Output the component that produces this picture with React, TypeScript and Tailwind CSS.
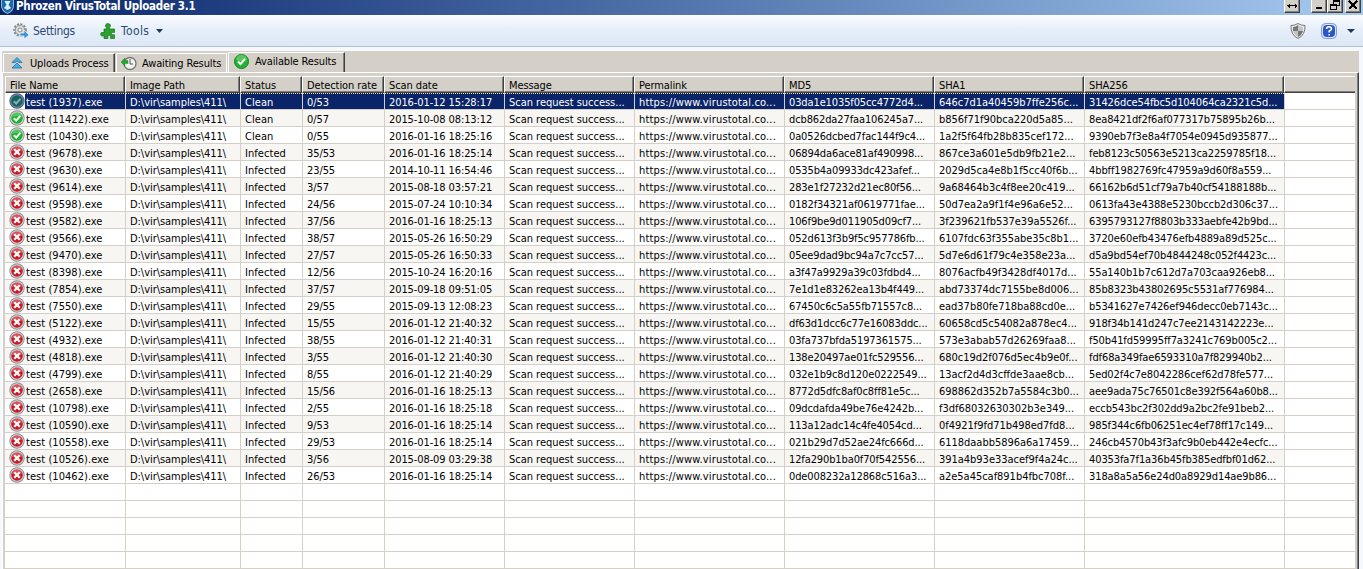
import React from "react";

const rows = `test (1937).exe|Clean|0/53|2016-01-12 15:28:17|03da1e1035f05cc4772d4...|646c7d1a40459b7ffe256c...|31426dce54fbc5d104064ca2321c5d...
test (11422).exe|Clean|0/57|2015-10-08 08:13:12|dcb862da27faa106245a7...|b856f71f90bca220d5a85...|8ea8421df2f6af077317b75895b26b...
test (10430).exe|Clean|0/55|2016-01-16 18:25:16|0a0526dcbed7fac144f9c4...|1a2f5f64fb28b835cef172...|9390eb7f3e8a4f7054e0945d935877...
test (9678).exe|Infected|35/53|2016-01-16 18:25:14|06894da6ace81af490998...|867ce3a601e5db9fb21e2...|feb8123c50563e5213ca2259785f18...
test (9630).exe|Infected|23/55|2014-10-11 16:54:46|0535b4a09933dc423afef...|2029d5ca4e8b1f5cc40f6b...|4bbff1982769fc47959a9d60f8a559...
test (9614).exe|Infected|3/57|2015-08-18 03:57:21|283e1f27232d21ec80f56...|9a68464b3c4f8ee20c419...|66162b6d51cf79a7b40cf54188188b...
test (9598).exe|Infected|24/56|2015-07-24 10:10:34|0182f34321af0619771fae...|50d7ea2a9f1f4e96a6e52...|0613fa43e4388e5230bccb2d306c37...
test (9582).exe|Infected|37/56|2016-01-16 18:25:13|106f9be9d011905d09cf7...|3f239621fb537e39a5526f...|6395793127f8803b333aebfe42b9bd...
test (9566).exe|Infected|38/57|2015-05-26 16:50:29|052d613f3b9f5c957786fb...|6107fdc63f355abe35c8b1...|3720e60efb43476efb4889a89d525c...
test (9470).exe|Infected|27/57|2015-05-26 16:50:33|05ee9dad9bc94a7c7cc57...|5d7e6d61f79c4e358e23a...|d5a9bd54ef70b4844248c052f4423c...
test (8398).exe|Infected|12/56|2015-10-24 16:20:16|a3f47a9929a39c03fdbd4...|8076acfb49f3428df4017d...|55a140b1b7c612d7a703caa926eb8...
test (7854).exe|Infected|37/57|2015-09-18 09:51:05|7e1d1e83262ea13b4f449...|abd73374dc7155be8d006...|85b8323b43802695c5531af776984...
test (7550).exe|Infected|29/55|2015-09-13 12:08:23|67450c6c5a55fb71557c8...|ead37b80fe718ba88cd0e...|b5341627e7426ef946decc0eb7143c...
test (5122).exe|Infected|15/55|2016-01-12 21:40:32|df63d1dcc6c77e16083ddc...|60658cd5c54082a878ec4...|918f34b141d247c7ee2143142223e...
test (4932).exe|Infected|38/55|2016-01-12 21:40:31|03fa737bfda5197361575...|573e3abab57d26269faa8...|f50b41fd59995ff7a3241c769b005c2...
test (4818).exe|Infected|3/55|2016-01-12 21:40:30|138e20497ae01fc529556...|680c19d2f076d5ec4b9e0f...|fdf68a349fae6593310a7f829940b2...
test (4799).exe|Infected|8/55|2016-01-12 21:40:29|032e1b9c8d120e0222549...|13acf2d4d3cffde3aae8cb...|5ed02f4c7e8042286cef62d78fe577...
test (2658).exe|Infected|15/56|2016-01-16 18:25:13|8772d5dfc8af0c8ff81e5c...|698862d352b7a5584c3b0...|aee9ada75c76501c8e392f564a60b8...
test (10798).exe|Infected|2/55|2016-01-16 18:25:18|09dcdafda49be76e4242b...|f3df68032630302b3e349...|eccb543bc2f302dd9a2bc2fe91beb2...
test (10590).exe|Infected|9/53|2016-01-16 18:25:14|113a12adc14c4fe4054cd...|0f4921f9fd71b498ed7fd8...|985f344c6fb06251ec4ef78ff17c149...
test (10558).exe|Infected|29/53|2016-01-16 18:25:14|021b29d7d52ae24fc666d...|6118daabb5896a6a17459...|246cb4570b43f3afc9b0eb442e4ecfc...
test (10526).exe|Infected|3/56|2015-08-09 03:29:38|12fa290b1ba0f70f542556...|391a4b93e33acef9f4a24c...|40353fa7f1a36b45fb385edfbf01d62...
test (10462).exe|Infected|26/53|2016-01-16 18:25:14|0de008232a12868c516a3...|a2e5a45caf891b4fbc708f...|318a8a5a56e24d0a8929d14ae9b86...`
  .split("\n")
  .map((line) => {
    const [name, status, rate, date, md5, sha1, sha256] = line.split("|");
    return [name, "D:\\vir\\samples\\411\\", status, rate, date, "Scan request success...", "https://www.virustotal.co...", md5, sha1, sha256, ""];
  });

const headers = ["File Name", "Image Path", "Status", "Detection rate", "Scan date", "Message", "Permalink", "MD5", "SHA1", "SHA256", ""];
const bodyGrid = "grid grid-cols-[121px_115px_62px_82px_120px_130px_150px_150px_150px_200px_70px]";
const headGrid = "grid grid-cols-[120px_115px_62px_82px_120px_130px_150px_150px_150px_200px_71px]";
const spacing = [
  "tracking-[0.05px]",
  "tracking-[-0.05px]",
  "tracking-[0.05px]",
  "tracking-[-0.1px]",
  "tracking-[-0.1px]",
  "tracking-[-0.02px]",
  "tracking-[0.16px]",
  "tracking-[-0.12px]",
  "tracking-[-0.03px]",
  "tracking-[-0.1px]",
  "",
];
const selectedFill =
  "bg-[#0a246a] bg-[repeating-linear-gradient(90deg,#f5db95_0_1px,#0a246a_1px_2px)] bg-[length:100%_1px] bg-no-repeat text-white";

function StatusIcon({ clean, selected }: { clean: boolean; selected: boolean }) {
  const fill = selected ? "#12655c" : clean ? "#18b52c" : "#cf1820";
  return (
    <svg viewBox="0 0 16 16" className="h-4 w-4 shrink-0">
      <circle cx="8" cy="8" r="7.7" fill={selected ? "#506088" : "#8c8c94"} />
      <circle cx="8" cy="8" r="6.8" fill={selected ? "#7683a4" : "#d4d4da"} />
      <circle cx="8" cy="8" r="5.8" fill={fill} />
      {!selected && <path d="M3 7a5 5 0 0 1 10 0Q8 5 3 7Z" fill="#fff" opacity=".25" />}
      {clean ? (
        <path d="m4.8 8.2 2.4 2.3 4.2-4.7" fill="none" stroke={selected ? "#8fa9b5" : "#fff"} strokeWidth="2" />
      ) : (
        <path d="m5.2 5.2 5.6 5.6m0-5.600-5.600 5.600" stroke="#fff" strokeWidth="2.300" />
      )}
    </svg>
  );
}

function Caption({ children }: { children: React.ReactNode }) {
  return (
    <span className="flex h-[13px] w-4 items-center justify-center border border-t-0 border-[#404040] border-l-white bg-[#d4d0c8] shadow-[inset_-1px_-1px_0_#808080]">
      <svg viewBox="0 0 12 12" className="h-3 w-3 shrink-0" fill="none" stroke="#000" shapeRendering="crispEdges">
        {children}
      </svg>
    </span>
  );
}

export default function App() {
  return (
    <div className="flex h-[569px] w-[1363px] flex-col overflow-hidden bg-[#f5f9fe] font-['DejaVu_Sans_Condensed','DejaVu_Sans',sans-serif] text-[11px] font-stretch-condensed text-black">
      <div className="flex h-[15px] shrink-0 items-start bg-linear-to-r from-[#0a246a] to-[#a6caf0] pl-px">
        <svg viewBox="0 0 13 14" className="h-[14px] w-[13px]">
          <path d="M0 0h13v6q0 5-6.5 8Q0 11 0 6Z" fill="#8fb6d6" />
          <path d="M1 0h11v6q0 4-5.500 7Q1 10 1 6Z" fill="#1c68a8" />
          <path d="M3.500 1h6L7.500 5l2.500 3-3.500 2L3 8l2.500-3Z" fill="#d8f0ff" />
        </svg>
        <span className="ml-[2px] text-[11.5px] leading-[12px] font-bold tracking-[-0.27px] text-white">Phrozen VirusTotal Uploader 3.1</span>
        <div className="ml-auto flex pr-[2px]">
          <Caption><path d="M1 5.500h10M3 3.500v4M9 3.500v4M2 4.500v2M10 4.500v2" /></Caption>
          <span className="w-[11px]" />
          <Caption><path d="M3 8.500h6M3 7.500h6" /></Caption>
          <Caption><path d="M4.500 4V.500h6v5H8M4 1.500h7M1.500 4.500h6v5h-6zM1 5.500h7" /></Caption>
          <span className="w-[2px]" />
          <Caption><path d="m2 1 8 8m0-8-8 8" strokeWidth="1.700" /></Caption>
        </div>
      </div>
      <div className="flex h-8 shrink-0 items-center border-t border-b border-t-white border-b-[#b3c0d6] bg-linear-to-b from-[#fafcff] from-0% via-[#e6effa] via-45% to-[#dce7f5] text-[12px] text-[#2c4a75]">
        <svg viewBox="0 0 16 16" className="ml-[13px] h-4 w-4">
          <circle cx="7" cy="7" r="5.500" fill="none" stroke="#888" strokeWidth="2.500" strokeDasharray="2 1.200" />
          <circle cx="7" cy="7" r="4.700" fill="#ddd" stroke="#999" />
          <circle cx="7" cy="7" r="2" fill="#f8f8f8" stroke="#888" />
          <path d="M7 10h4V7l5 5-5 4v-3H7Z" fill="#3a94dc" stroke="#e8f4ff" strokeWidth=".7" />
        </svg>
        <span className="ml-1 w-[67px] tracking-[-0.3px]">Settings</span>
        <svg viewBox="0 0 16 16" className="h-4 w-4" fill="#2fa02e" stroke="#167018" strokeWidth=".7">
          <path d="M6.500 6V4.800Q5 3.500 5.500 2 6.500.500 8 .600 10 .600 10.500 2.200 10.700 3.500 9.500 4.600V6H14.500V9.500Q12 8.500 11.500 10.500 12 12.500 14.500 11.700V15.500H10.500Q11.500 12.500 9.200 12.500T8 15.500H4V12.500Q1 14 .600 11.300.600 8.500 4 9.700V6Z" />
        </svg>
        <span className="ml-[5px] tracking-[0.4px]">Tools</span>
        <svg viewBox="0 0 7 4" className="ml-[7px] h-1 w-[7px]"><path d="M0 0h7L3.500 4Z" fill="#1e395b" /></svg>
        <svg viewBox="0 0 16 16" className="ml-auto h-4 w-4">
          <path d="M8 .5Q11 2.500 15 2.500 15.500 12 8 15.500.5 12 1 2.500 5 2.500 8 .5Z" fill="#eee" stroke="#777" />
          <path d="M8 2v6H3V4q3 0 5-2m0 6h5q-1 4-5 6Z" fill="#777" />
          <path d="M8 2v6h5V4q-3 0-5-2M3 8h5v6Q4 12 3 8" fill="#c4c4c4" />
        </svg>
        <svg viewBox="0 0 16 16" className="ml-[15px] h-4 w-4">
          <rect x=".5" y=".5" width="15" height="15" rx="4" fill="#dce5f8" stroke="#8499cf" />
          <rect x="2" y="2" width="12" height="12" rx="4" fill="#2a56c6" />
          <path d="M5.500 6q0-2.300 2.500-2.300T10.500 6Q10.500 7 8.200 8v1.500M8.200 11v1.500" fill="none" stroke="#fff" strokeWidth="1.600" />
        </svg>
        <svg viewBox="0 0 8 4" className="mr-2 ml-[10px] h-1 w-2"><path d="M0 0h8L4 4Z" fill="#1e395b" /></svg>
      </div>
      <div className="mt-1 mr-1 ml-[2px] flex h-[518px] flex-col bg-[#d4d0c8]">
        <div className="flex h-[21px] shrink-0 items-end tracking-[-0.13px]">
          <div className="ml-px flex h-[19px] w-[112px] items-center border-t border-r border-l border-t-white border-r-[#404040] border-l-white pl-[7px] shadow-[inset_-1px_0_0_#808080]">
            <svg viewBox="0 0 12 12" className="h-3 w-3" fill="#41b0ee" stroke="#226da6" strokeWidth=".8">
              <path d="m6 .5 5 5H8L6 4 4 5.500H1ZM6 6l5 5H1Z" />
            </svg>
            <span className="mt-[3px] ml-[7px] whitespace-nowrap">Uploads Process</span>
          </div>
          <div className="ml-px flex h-[19px] w-[111px] items-center border-t border-r border-l border-white pl-1">
            <svg viewBox="0 0 16 15" className="h-[15px] w-4">
              <circle cx="9" cy="7.500" r="6" fill="#f2f2f2" stroke="#777" strokeWidth="1.300" />
              <path d="M9 3v5h3" fill="none" stroke="#555" />
              <path d="m0 6 4-4v2.500h3v3H4V10Z" fill="#24a72c" stroke="#167018" strokeWidth=".4" />
            </svg>
            <span className="mt-[3px] ml-[5px] whitespace-nowrap">Awaiting Results</span>
          </div>
          <div className="ml-px flex h-[20px] w-[117px] items-center border-t border-r border-l border-t-white border-r-[#404040] border-l-white pb-[2px] pl-[5px] shadow-[inset_-1px_0_0_#808080]">
            <svg viewBox="0 0 15 15" className="h-[15px] w-[15px]">
              <circle cx="7.500" cy="7.500" r="7" fill="#21b52f" stroke="#148020" />
              <path d="M2 6a5.500 5.500 0 0 1 11 0Q7.500 8 2 6" fill="#fff" opacity=".25" />
              <path d="M4 7.500 6.500 10 11 5" fill="none" stroke="#fff" strokeWidth="2" />
            </svg>
            <span className="mt-[2px] ml-[6px] whitespace-nowrap">Available Results</span>
          </div>
        </div>
        <div className="flex h-[497px] flex-col border-t border-r border-l border-t-white border-r-[#404040] border-l-white pt-[3px] pr-[3px] pl-[2px] shadow-[inset_-1px_0_0_#808080]">
          <div className={`${headGrid} h-[17px] w-[1350px] shrink-0 overflow-hidden tracking-[-0.1px]`}>
            {headers.map((h, i) => (
              <div key={i} className={`h-[17px] overflow-hidden border-t border-b border-l border-t-white border-b-[#404040] border-l-white pl-1 leading-[17px] whitespace-nowrap ${i < 10 ? "border-r border-r-[#404040] shadow-[inset_-1px_-1px_0_#808080]" : "shadow-[inset_0_-1px_0_#808080]"}`}>
                {h}
              </div>
            ))}
          </div>
          <div className="flex-1 overflow-hidden bg-white">
            {Array.from({ length: 28 }, (_, r) => (
              <div key={r} className={bodyGrid}>
                {headers.map((_, c) => {
                  const row = rows[r];
                  const tint =
                    r === 0 && c > 0 && c < 10 ? selectedFill : row && r % 2 === 1 && c < 10 ? "bg-[#f7f6f3]" : "bg-white";
                  return (
                    <div key={c} className={`flex h-[17px] overflow-hidden border-b border-[#d4d0c8] pl-1 leading-[16px] whitespace-nowrap ${c < 10 ? "border-r" : ""} ${tint} ${spacing[c]}`}>
                      {row && c === 0 && <StatusIcon clean={row[2] === "Clean"} selected={r === 0} />}
                      {c === 0 ? (
                        <span className={`h-4 flex-1 pt-[2px] pl-px ${r === 0 ? selectedFill : ""}`}>{row?.[c]}</span>
                      ) : (
                        <span className="h-4 pt-[2px]">{row?.[c]}</span>
                      )}
                    </div>
                  );
                })}
              </div>
            ))}
          </div>
        </div>
      </div>
    </div>
  );
}
